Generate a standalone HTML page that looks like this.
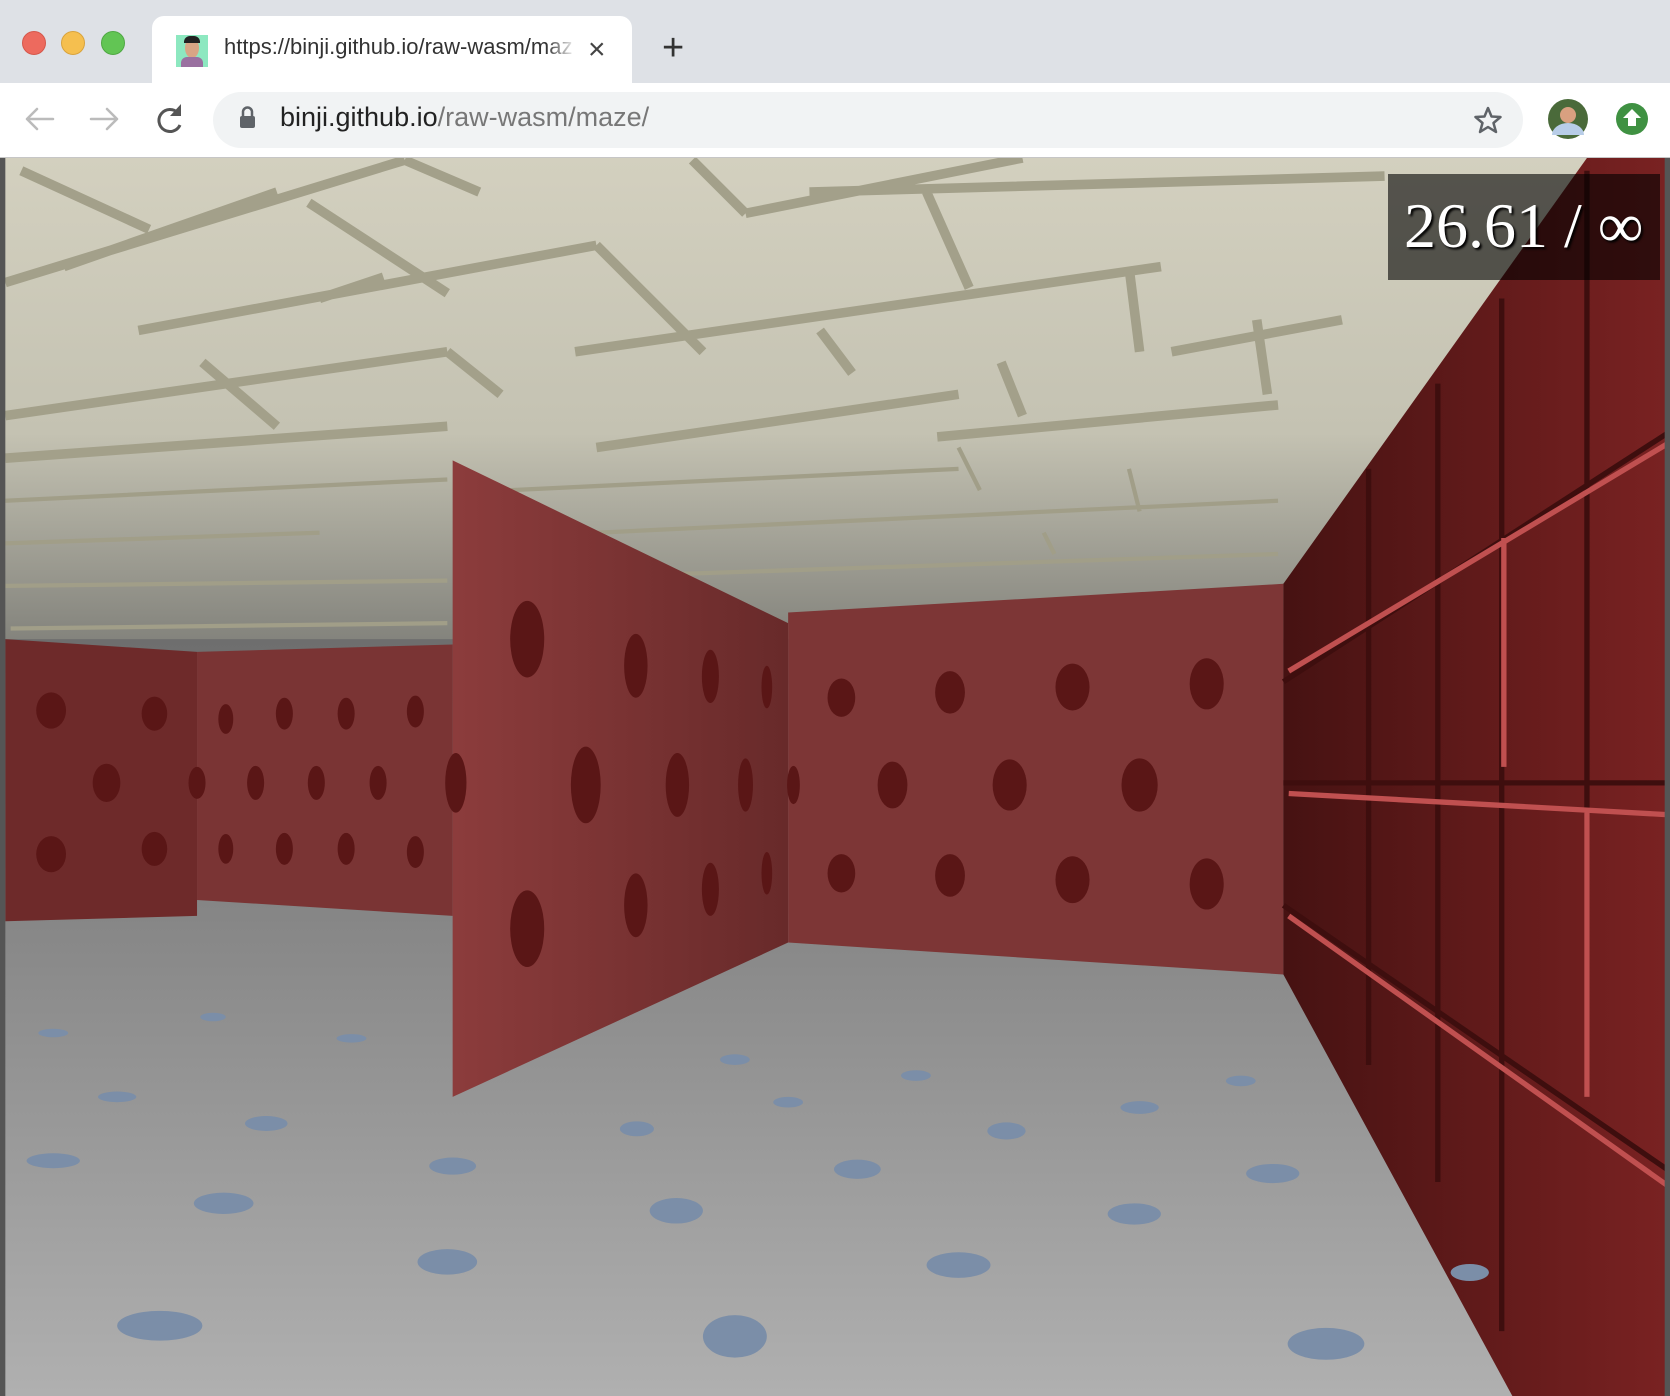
<!DOCTYPE html>
<html><head><meta charset="utf-8"><style>
html,body{margin:0;padding:0;width:1670px;height:1396px;overflow:hidden;background:#fff;font-family:"Liberation Sans",sans-serif}
.abs{position:absolute}
</style></head><body>
<div class="abs" style="left:0;top:0;width:1670px;height:83px;background:#dee1e6"></div>
<div class="abs" style="left:22px;top:31px;width:24px;height:24px;border-radius:50%;background:#ed6a5e;border:1px solid #d5574b;box-sizing:border-box"></div>
<div class="abs" style="left:61px;top:31px;width:24px;height:24px;border-radius:50%;background:#f5bf4f;border:1px solid #d9a33c;box-sizing:border-box"></div>
<div class="abs" style="left:101px;top:31px;width:24px;height:24px;border-radius:50%;background:#62c554;border:1px solid #4fa843;box-sizing:border-box"></div>
<div class="abs" style="left:152px;top:16px;width:480px;height:70px;background:#fff;border-radius:12px 12px 0 0"></div>
<div class="abs" style="left:176px;top:35px;width:32px;height:32px;background:#8de8c0;overflow:hidden">
 <div class="abs" style="left:9px;top:3px;width:14px;height:20px;border-radius:50%;background:#d8a585"></div>
 <div class="abs" style="left:8px;top:1px;width:16px;height:7px;border-radius:6px 6px 0 0;background:#222"></div>
 <div class="abs" style="left:5px;top:22px;width:22px;height:12px;background:#9a70a0;border-radius:6px 6px 0 0"></div>
</div>
<div class="abs" style="left:224px;top:34px;font-size:22px;color:#333;white-space:nowrap;width:348px;overflow:hidden">https://binji.github.io/raw-wasm/maze/</div>
<div class="abs" style="left:546px;top:30px;width:30px;height:40px;background:linear-gradient(90deg,rgba(255,255,255,0),#fff)"></div>
<div class="abs" style="left:588px;top:30px;font-size:30px;color:#444;line-height:40px">×</div>
<div class="abs" style="left:662px;top:26px;font-size:38px;color:#333;line-height:44px">+</div>
<div class="abs" style="left:0;top:83px;width:1670px;height:74px;background:#fff;border-bottom:1px solid #c6c6c6"></div>
<svg class="abs" style="left:0;top:83px" width="1670" height="74">
 <g stroke="#bbb" stroke-width="2.5" fill="none" stroke-linecap="round"><path d="M27 36H53M27 36l10-10M27 36l10 10"/><path d="M91 36H117M117 36l-10-10M117 36l-10 10"/></g>
 <path d="M178 30a11 11 0 1 0 2 12" stroke="#555" stroke-width="3" fill="none"/><path d="M181 21v12h-11z" fill="#555"/>
 <rect x="213" y="9" width="1310" height="56" rx="28" fill="#f1f3f4"/>
 <rect x="240" y="33" width="15" height="12" rx="2" fill="#5f6368"/><path d="M243 33v-4a4.5 4.5 0 0 1 9 0v4" stroke="#5f6368" stroke-width="2.5" fill="none"/>
 <path d="M1488 25l3.5 8.5 9 .5-7 6 2.5 9-8-5-8 5 2.5-9-7-6 9-.5z" stroke="#5f6368" stroke-width="2.5" fill="none" stroke-linejoin="round"/>
 <circle cx="1568" cy="36" r="20" fill="#4a6a3a"/><circle cx="1568" cy="32" r="8" fill="#d9a080"/><path d="M1552 52a16 12 0 0 1 32 0z" fill="#b8cde8"/>
 <circle cx="1632" cy="36" r="16" fill="#3f9142"/><path d="M1632 26l-9 9h5v8h8v-8h5z" fill="#fff"/>
</svg>
<div class="abs" style="left:280px;top:102px;font-size:27px;color:#222;white-space:nowrap">binji.github.io<span style="color:#777">/raw-wasm/maze/</span></div>

<svg class="abs" style="left:0;top:158px" width="1670" height="1238" viewBox="0 148 1568 1163" preserveAspectRatio="none">
 <defs>
  <linearGradient id="ceil" x1="0" y1="0" x2="0" y2="1" gradientUnits="objectBoundingBox"><stop offset="0" stop-color="#d3d0bf"/><stop offset="0.55" stop-color="#c4c2b2"/><stop offset="1" stop-color="#7e7e78"/></linearGradient>
  <linearGradient id="floor" x1="0" y1="0" x2="0" y2="1"><stop offset="0" stop-color="#6e6e6e"/><stop offset="1" stop-color="#b0b0b0"/></linearGradient>
  <linearGradient id="rw" x1="0" y1="0" x2="1" y2="0"><stop offset="0" stop-color="#461212"/><stop offset="1" stop-color="#7a2222"/></linearGradient>
  <linearGradient id="cw" x1="0" y1="0" x2="1" y2="0"><stop offset="0" stop-color="#8c3c3c"/><stop offset="1" stop-color="#682a2a"/></linearGradient>
 </defs>
 <rect x="0" y="148" width="1568" height="470" fill="url(#ceil)"/>
 <rect x="0" y="600" width="1568" height="711" fill="url(#floor)"/>
 <g stroke="#a3a08a" stroke-width="9" fill="none">
  <path d="M20 160L140 215M5 265L380 150M60 250L260 180M290 190L420 275M130 310L560 230M380 150L450 180M650 150L700 200M560 230L620 290M700 200L960 148M760 180L1300 165M870 180L910 270M540 330L1090 250M1060 250L1070 330M360 260L300 280M5 390L420 330M190 340L260 400M420 330L470 370M5 430L420 400M620 290L660 330M770 310L800 350M940 340L960 390M1100 330L1260 300M1180 300L1190 370M880 410L1200 380M560 420L900 370"/>
 </g>
 <g stroke="#a19e88" stroke-width="4" fill="none">
  <path d="M5 470L420 450M5 510L300 500M5 550L420 545M10 590L420 585M480 460L900 440M560 500L1200 470M600 540L1200 520M900 420L920 460M1060 440L1070 480M980 500L990 520"/>
 </g>
 <polygon points="5,600 185,612 185,860 5,865" fill="#6e2a2a"/>
 <polygon points="185,612 425,605 425,860 185,845" fill="#7a3434"/>
 <polygon points="425,432 740,585 740,885 425,1030" fill="url(#cw)"/>
 <polygon points="740,575 1205,548 1205,915 740,885" fill="#7d3636"/>
 <polygon points="1205,548 1490,148 1568,148 1568,1311 1420,1311 1205,915" fill="url(#rw)"/>
 <g stroke="#3e0e0e" stroke-width="5" fill="none">
  <path d="M1205,640L1568,405M1205,735L1568,735M1205,850L1568,1100M1285,440V1000M1350,360V1110M1410,280V1250M1490,160V1030"/>
 </g>
 <g stroke="#c05050" stroke-width="5" fill="none">
  <path d="M1210,630L1568,415M1210,745L1568,765M1210,860L1568,1115M1412,505V720M1490,760V1030"/>
 </g>
 <g fill="#5a1616">
  <ellipse cx="48" cy="667" rx="14" ry="17"/><ellipse cx="145" cy="670" rx="12" ry="16"/><ellipse cx="100" cy="735" rx="13" ry="18"/><ellipse cx="48" cy="802" rx="14" ry="17"/><ellipse cx="145" cy="797" rx="12" ry="16"/>
  <ellipse cx="212" cy="675" rx="7" ry="14"/><ellipse cx="267" cy="670" rx="8" ry="15"/><ellipse cx="325" cy="670" rx="8" ry="15"/><ellipse cx="390" cy="668" rx="8" ry="15"/>
  <ellipse cx="185" cy="735" rx="8" ry="15"/><ellipse cx="240" cy="735" rx="8" ry="16"/><ellipse cx="297" cy="735" rx="8" ry="16"/><ellipse cx="355" cy="735" rx="8" ry="16"/><ellipse cx="428" cy="735" rx="10" ry="28"/>
  <ellipse cx="212" cy="797" rx="7" ry="14"/><ellipse cx="267" cy="797" rx="8" ry="15"/><ellipse cx="325" cy="797" rx="8" ry="15"/><ellipse cx="390" cy="800" rx="8" ry="15"/>
  <ellipse cx="495" cy="600" rx="16" ry="36"/><ellipse cx="597" cy="625" rx="11" ry="30"/><ellipse cx="667" cy="635" rx="8" ry="25"/><ellipse cx="720" cy="645" rx="5" ry="20"/>
  <ellipse cx="550" cy="737" rx="14" ry="36"/><ellipse cx="636" cy="737" rx="11" ry="30"/><ellipse cx="700" cy="737" rx="7" ry="25"/><ellipse cx="745" cy="737" rx="6" ry="18"/>
  <ellipse cx="495" cy="872" rx="16" ry="36"/><ellipse cx="597" cy="850" rx="11" ry="30"/><ellipse cx="667" cy="835" rx="8" ry="25"/><ellipse cx="720" cy="820" rx="5" ry="20"/>
  <ellipse cx="790" cy="655" rx="13" ry="18"/><ellipse cx="892" cy="650" rx="14" ry="20"/><ellipse cx="1007" cy="645" rx="16" ry="22"/><ellipse cx="1133" cy="642" rx="16" ry="24"/>
  <ellipse cx="838" cy="737" rx="14" ry="22"/><ellipse cx="948" cy="737" rx="16" ry="24"/><ellipse cx="1070" cy="737" rx="17" ry="25"/>
  <ellipse cx="790" cy="820" rx="13" ry="18"/><ellipse cx="892" cy="822" rx="14" ry="20"/><ellipse cx="1007" cy="826" rx="16" ry="22"/><ellipse cx="1133" cy="830" rx="16" ry="24"/>
 </g>
 <g fill="#7b8ea8">
  <ellipse cx="50" cy="1090" rx="25" ry="7"/><ellipse cx="210" cy="1130" rx="28" ry="10"/><ellipse cx="150" cy="1245" rx="40" ry="14"/><ellipse cx="420" cy="1185" rx="28" ry="12"/><ellipse cx="250" cy="1055" rx="20" ry="7"/>
  <ellipse cx="425" cy="1095" rx="22" ry="8"/><ellipse cx="598" cy="1060" rx="16" ry="7"/><ellipse cx="635" cy="1137" rx="25" ry="12"/><ellipse cx="690" cy="1255" rx="30" ry="20"/>
  <ellipse cx="805" cy="1098" rx="22" ry="9"/><ellipse cx="900" cy="1188" rx="30" ry="12"/><ellipse cx="945" cy="1062" rx="18" ry="8"/><ellipse cx="1065" cy="1140" rx="25" ry="10"/>
  <ellipse cx="1195" cy="1102" rx="25" ry="9"/><ellipse cx="1245" cy="1262" rx="36" ry="15"/><ellipse cx="1070" cy="1040" rx="18" ry="6"/><ellipse cx="740" cy="1035" rx="14" ry="5"/>
  <ellipse cx="860" cy="1010" rx="14" ry="5"/><ellipse cx="1165" cy="1015" rx="14" ry="5"/><ellipse cx="690" cy="995" rx="14" ry="5"/><ellipse cx="1380" cy="1195" rx="18" ry="8"/>
  <ellipse cx="110" cy="1030" rx="18" ry="5"/><ellipse cx="50" cy="970" rx="14" ry="4"/><ellipse cx="200" cy="955" rx="12" ry="4"/><ellipse cx="330" cy="975" rx="14" ry="4"/>
 </g>
 <rect x="0" y="148" width="5" height="1163" fill="#555"/>
 <rect x="1563" y="148" width="5" height="1163" fill="#555"/>
</svg>
<div class="abs" style="left:1388px;top:174px;width:272px;height:106px;background:rgba(0,0,0,0.6)"></div>
<div class="abs" style="left:1404px;top:188px;font-family:'Liberation Serif',serif;font-size:64px;color:#fff;line-height:76px;text-shadow:2px 2px 2px #000;white-space:nowrap">26.61 / ∞</div>
</body></html>
